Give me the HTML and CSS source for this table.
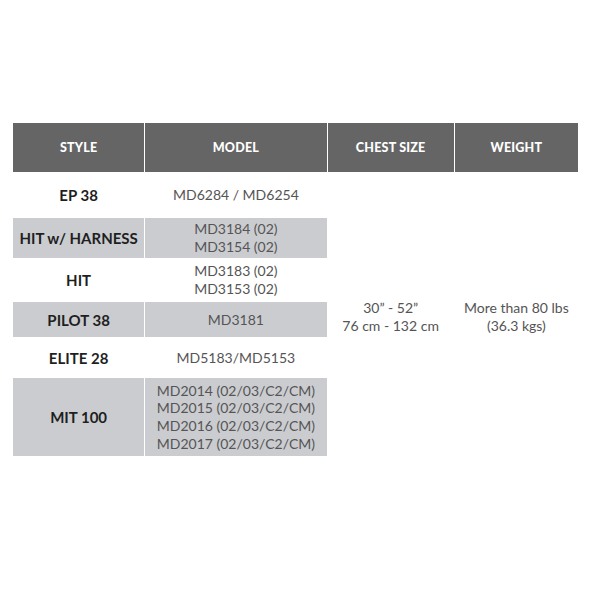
FILE: index.html
```html
<!DOCTYPE html>
<html>
<head>
<meta charset="utf-8">
<link rel="stylesheet" href="styles.css">
</head>
<body>
<table class="spec">
  <colgroup>
    <col class="c-style"><col class="c-model"><col class="c-chest"><col class="c-weight">
  </colgroup>
  <thead>
    <tr class="head">
      <th>STYLE</th>
      <th>MODEL</th>
      <th class="th-chest">CHEST SIZE</th>
      <th class="th-weight">WEIGHT</th>
    </tr>
  </thead>
  <tbody>
    <tr class="r1">
      <td class="name">EP 38</td>
      <td class="model">MD6284 / MD6254</td>
      <td class="shared" rowspan="6">30” - 52”<br>76 cm - 132 cm</td>
      <td class="shared" rowspan="6">More than 80 lbs<br>(36.3 kgs)</td>
    </tr>
    <tr class="r2 alt">
      <td class="name">HIT w/ HARNESS</td>
      <td class="model">MD3184 (02)<br>MD3154 (02)</td>
    </tr>
    <tr class="r3">
      <td class="name">HIT</td>
      <td class="model">MD3183 (02)<br>MD3153 (02)</td>
    </tr>
    <tr class="r4 alt">
      <td class="name">PILOT 38</td>
      <td class="model">MD3181</td>
    </tr>
    <tr class="r5">
      <td class="name">ELITE 28</td>
      <td class="model">MD5183/MD5153</td>
    </tr>
    <tr class="r6 alt">
      <td class="name">MIT 100</td>
      <td class="model">MD2014 (02/03/C2/CM)<br>MD2015 (02/03/C2/CM)<br>MD2016 (02/03/C2/CM)<br>MD2017 (02/03/C2/CM)</td>
    </tr>
  </tbody>
</table>
</body>
</html>
```

FILE: styles.css
```css
html, body {
  margin: 0;
  padding: 0;
  background: #ffffff;
}

body {
  font-family: Lato, "Liberation Sans", sans-serif;
}

.spec {
  margin: 123px 0 0 12px;
  border-collapse: separate;
  border-spacing: 1px 0;
  table-layout: fixed;
  width: 567px;
}

.c-style { width: 131px; }
.c-model { width: 181px; }
.c-chest { width: 126px; }
.c-weight { width: 123px; }

.head th {
  background: #656565;
  color: #ffffff;
  font-weight: 900;
  font-size: 12.5px;
  letter-spacing: 0.2px;
  height: 49px;
  padding: 0;
  text-align: center;
  vertical-align: middle;
}

td {
  padding: 0;
  text-align: center;
  vertical-align: middle;
}

.name {
  font-weight: 700;
  font-size: 15px;
  color: #1f1f1f;
}

.model {
  font-weight: 400;
  font-size: 14px;
  line-height: 17.7px;
  color: #555555;
}

.shared {
  font-weight: 400;
  font-size: 14px;
  line-height: 18px;
  color: #555555;
  background: #ffffff;
  padding-top: 6px;
}

.alt .name,
.alt .model {
  background: #cbccd0;
}

.r1 td { height: 46px; }
.r2 td { height: 40px; }
.r3 td { height: 44px; }
.r4 td { height: 35px; }
.r5 td { height: 41px; }
.r6 td { height: 78px; }
```
